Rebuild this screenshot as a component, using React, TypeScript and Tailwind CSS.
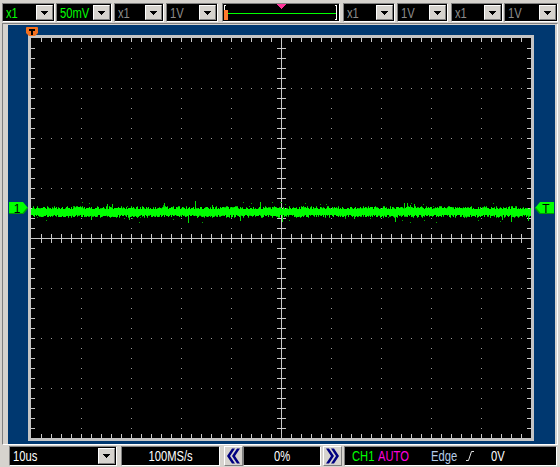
import React from 'react';

// seeded random so the trace looks the same on every render
function makeRng(seed: number) {
  let s = seed;
  return () => {
    s = (s + 0x6d2b79f5) | 0;
    let t = Math.imul(s ^ (s >>> 15), 1 | s);
    t = (t + Math.imul(t ^ (t >>> 7), 61 | t)) ^ t;
    return ((t ^ (t >>> 14)) >>> 0) / 4294967296;
  };
}

const W = 500;
const H = 400;
const TRACE_Y = 174;

type Px = { x: number; y: number; w: number; h: number; c: string };

function buildGrid(): Px[] {
  const out: Px[] = [];
  const dot = '#9a9a9a';
  const tick = '#c8c8c8';
  // dotted division lines
  for (const gx of [50, 100, 150, 200, 300, 350, 400, 450]) {
    for (let y = 10; y < H; y += 10) out.push({ x: gx, y, w: 1, h: 1, c: dot });
  }
  for (const gy of [50, 100, 150, 250, 300, 350]) {
    for (let x = 10; x < W; x += 10) out.push({ x, y: gy, w: 1, h: 1, c: dot });
  }
  // edge ticks
  for (let x = 10; x < W; x += 10) {
    out.push({ x, y: 0, w: 1, h: 4, c: tick });
    out.push({ x, y: H - 4, w: 1, h: 4, c: tick });
  }
  for (let y = 10; y < H; y += 10) {
    out.push({ x: 0, y, w: 4, h: 1, c: tick });
    out.push({ x: W - 4, y, w: 4, h: 1, c: tick });
  }
  // centre cross
  out.push({ x: 250, y: 0, w: 1, h: H, c: tick });
  out.push({ x: 0, y: 200, w: W, h: 1, c: tick });
  for (let y = 10; y < H; y += 10) out.push({ x: 246, y, w: 9, h: 1, c: tick });
  for (let x = 10; x < W; x += 10) out.push({ x, y: 196, w: 1, h: 9, c: tick });
  return out;
}

function buildTrace(): Px[] {
  const rnd = makeRng(7);
  const out: Px[] = [];
  for (let x = 0; x < W; x++) {
    const top = TRACE_Y - 3 - Math.floor(rnd() * 3);
    const bot = TRACE_Y + 2 + Math.floor(rnd() * 3);
    out.push({ x, y: top, w: 1, h: bot - top + 1, c: '#00ff00' });
    if (rnd() < 0.35) out.push({ x, y: top - 1, w: 1, h: 1, c: '#00b400' });
    if (rnd() < 0.35) out.push({ x, y: bot + 1, w: 1, h: 1, c: '#00b400' });
    if (rnd() < 0.06) {
      const len = 2 + Math.floor(rnd() * 5);
      if (rnd() < 0.5) out.push({ x, y: top - len, w: 1, h: len, c: '#00e000' });
      else out.push({ x, y: bot + 1, w: 1, h: len, c: '#00e000' });
    }
    if (rnd() < 0.09) {
      const dy = 5 + Math.floor(rnd() * 6);
      out.push({ x, y: rnd() < 0.5 ? TRACE_Y - dy : TRACE_Y + dy, w: 1, h: 1, c: '#00a000' });
    }
  }
  return out;
}

const grid = buildGrid();
const trace = buildTrace();

function Scope() {
  return (
    <svg width={W} height={H} viewBox={`0 0 ${W} ${H}`} shapeRendering="crispEdges" className="block">
      <rect x={0} y={0} width={W} height={H} fill="#000" />
      {grid.map((p, i) => (
        <rect key={'g' + i} x={p.x} y={p.y} width={p.w} height={p.h} fill={p.c} />
      ))}
      {trace.map((p, i) => (
        <rect key={'t' + i} x={p.x} y={p.y} width={p.w} height={p.h} fill={p.c} />
      ))}
    </svg>
  );
}

// condensed text: the LCD-ish narrow face of the original
function Narrow({ children, className = '' }: { children: React.ReactNode; className?: string }) {
  return <span className={`inline-block origin-left scale-x-[0.8] whitespace-nowrap ${className}`}>{children}</span>;
}

function DownArrow() {
  return (
    <svg width="7" height="4" viewBox="0 0 7 4" shapeRendering="crispEdges">
      <polygon points="0,0 7,0 3.5,4" fill="#000" />
    </svg>
  );
}

function DropBtn() {
  return (
    <div className="flex h-full w-[17px] shrink-0 items-center justify-center border border-t-white border-l-white border-b-[#808080] border-r-[#808080] bg-[#d6d3ce]">
      <DownArrow />
    </div>
  );
}

function Combo({ className, text, color }: { className: string; text: string; color: string }) {
  return (
    <div className={`flex h-[19px] shrink-0 border border-t-[#808080] border-l-[#808080] border-b-white border-r-white bg-black p-[1px] ${className}`}>
      <div className={`flex-1 overflow-hidden pl-[2px] text-[14px] leading-[16px] ${color}`}>
        <Narrow>{text}</Narrow>
      </div>
      <DropBtn />
    </div>
  );
}

function TriggerBar() {
  return (
    <div className="ml-[4px] h-[19px] w-[118px] shrink-0 border border-t-[#808080] border-l-[#808080] border-b-white border-r-white bg-black">
      <svg width="116" height="17" viewBox="0 0 116 17" shapeRendering="crispEdges" className="block">
        <polyline points="3,1.5 1.5,1.5 1.5,15.5 3,15.5" fill="none" stroke="#fff" strokeWidth="1" />
        <polyline points="112,1.5 113.5,1.5 113.5,15.5 112,15.5" fill="none" stroke="#fff" strokeWidth="1" />
        <rect x="5" y="9" width="108" height="1" fill="#00ff00" />
        <polygon points="54,0 63,0 58.5,5" fill="#ff3399" />
        <rect x="1" y="6" width="4" height="10" rx="1.5" fill="#ff7a30" />
      </svg>
    </div>
  );
}

function ChevronBtn({ dir }: { dir: 'left' | 'right' }) {
  return (
    <div className="flex h-[20px] w-[19px] shrink-0 items-center justify-center border border-t-white border-l-white border-b-[#808080] border-r-[#808080] bg-[#d6d3ce]">
      <svg width="15" height="16" viewBox="0 0 15 16" className={dir === 'right' ? '-scale-x-100' : ''}>
        <polygon points="6,0.5 9,0.5 4,8 9,15.5 6,15.5 1,8" fill="#000080" />
        <polygon points="11,0.5 14,0.5 9,8 14,15.5 11,15.5 6,8" fill="#000080" />
      </svg>
    </div>
  );
}

function SideMarker({ label, flip }: { label: string; flip?: boolean }) {
  return (
    <svg width="20" height="12" viewBox="0 0 20 12" className="block">
      <g transform={flip ? 'translate(20,0) scale(-1,1)' : undefined}>
        <polygon points="0,0 14,0 19,6 14,12 0,12" fill="#00ff00" />
        <polyline points="14,11.5 18.5,6" stroke="#00a000" strokeWidth="1.2" fill="none" />
        <rect x="0" y="11" width="14" height="1" fill="#00a000" />
      </g>
      <text x={flip ? 12 : 8} y="10.5" textAnchor="middle" fontSize="12" fontFamily="Liberation Sans, Arial, sans-serif" fill="#000">
        {label}
      </text>
    </svg>
  );
}

function TopMarker() {
  return (
    <svg width="12" height="10" viewBox="0 0 12 10" className="block">
      <path d="M1,0 H11 Q12,0 12,1 V6 L9,9 H3 L0,6 V1 Q0,0 1,0 Z" fill="#f2701f" />
      <rect x="3" y="2" width="6" height="2" fill="#000" />
      <rect x="5" y="2" width="2" height="6" fill="#000" />
    </svg>
  );
}

export default function App() {
  return (
    <div className="flex h-[467px] w-[560px] flex-col overflow-hidden bg-[#d6d3ce] font-['Liberation_Sans',Arial,sans-serif] select-none">
      {/* channel / trigger position bar */}
      <div className="flex h-[23px] shrink-0 items-start pt-[3px]">
        <Combo className="ml-[2px] w-[53px]" text="x1" color="text-[#00ff00]" />
        <Combo className="ml-[1px] w-[56px]" text="50mV" color="text-[#00ff00]" />
        <Combo className="ml-[2px] w-[50px]" text="x1" color="text-[#8c8c8c]" />
        <Combo className="ml-[2px] w-[52px]" text="1V" color="text-[#8c8c8c]" />
        <TriggerBar />
        <Combo className="ml-[3px] w-[52px]" text="x1" color="text-[#8c8c8c]" />
        <Combo className="ml-[2px] w-[51px]" text="1V" color="text-[#8c8c8c]" />
        <Combo className="ml-[3px] w-[52px]" text="x1" color="text-[#8c8c8c]" />
        <Combo className="ml-[1px] w-[54px]" text="1V" color="text-[#8c8c8c]" />
      </div>

      {/* screen */}
      <div className="mx-[2px] flex h-[422px] shrink-0 border border-t-[#808080] border-l-[#808080] border-b-white border-r-white pt-[1px] pr-[2px] pb-0 pl-[5px]">
        <div className="relative flex-1 bg-[#003870] pl-[20px] pt-[10px]">
          <div className="h-[406px] w-[506px] border-[3px] border-[#c4c4c4] bg-black">
            <Scope />
          </div>
          <div className="absolute left-[18px] top-[2px]">
            <TopMarker />
          </div>
          <div className="absolute left-[1px] top-[177px]">
            <SideMarker label="1" />
          </div>
          <div className="absolute left-[526px] top-[177px]">
            <SideMarker label="T" flip />
          </div>
        </div>
      </div>

      {/* timebase / trigger status */}
      <div className="flex h-[22px] shrink-0 items-start pt-[1px] text-[14px] leading-[18px] text-white">
        <Combo className="ml-[9px] h-[20px] w-[108px]" text="10us" color="text-white" />
        <div className="ml-[4px] flex h-[20px] w-[99px] justify-center border border-t-[#808080] border-l-[#808080] border-b-white border-r-white bg-black">
          <span className="inline-block scale-x-[0.8] whitespace-nowrap">100MS/s</span>
        </div>
        <div className="ml-[4px]">
          <ChevronBtn dir="left" />
        </div>
        <div className="flex h-[20px] w-[78px] justify-center border border-t-[#808080] border-l-[#808080] border-b-white border-r-white bg-black">
          <span className="inline-block scale-x-[0.8] whitespace-nowrap">0%</span>
        </div>
        <div className="ml-[2px]">
          <ChevronBtn dir="right" />
        </div>
        <div className="ml-[2px] flex h-[20px] w-[213px] items-center border border-t-[#808080] border-l-[#808080] border-b-white border-r-white bg-black">
          <div className="ml-[7px] w-[26px]">
            <Narrow className="text-[#00ff00]">CH1</Narrow>
          </div>
          <div className="w-[53px]">
            <Narrow className="text-[#ff00dd]">AUTO</Narrow>
          </div>
          <div className="w-[35px]">
            <Narrow className="text-[#b4cce8]">Edge</Narrow>
          </div>
          <div className="w-[25px]">
            <svg width="8" height="10" viewBox="0 0 8 10" className="block">
              <polyline points="0,9.5 2.5,9.5 5.5,0.5 8,0.5" fill="none" stroke="#e0e0e0" strokeWidth="1" />
            </svg>
          </div>
          <Narrow className="text-white">0V</Narrow>
        </div>
      </div>
    </div>
  );
}
